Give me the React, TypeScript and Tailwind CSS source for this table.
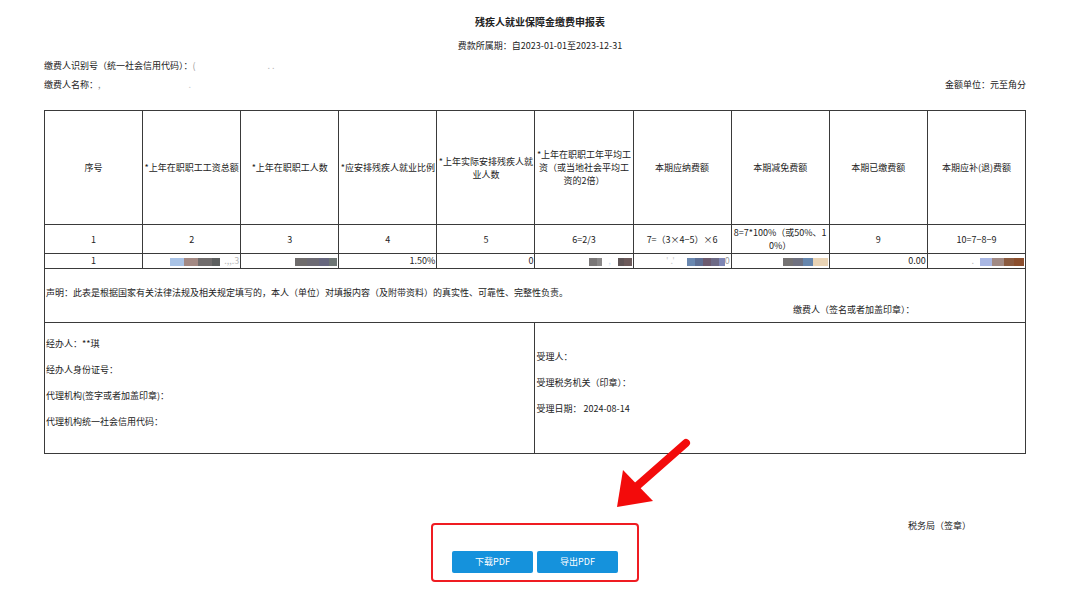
import React from "react";

const font = {
  fontFamily: '"Noto Sans CJK SC", "Noto Sans", "Liberation Sans", sans-serif',
};

function Blob({ colors, widths }: { colors: string[]; widths: number[] }) {
  return (
    <span className="inline-flex items-center align-middle blur-[0.6px]">
      {colors.map((c, i) => (
        <span
          key={i}
          className="inline-block h-[8px]"
          style={{ background: c, width: widths[i] }}
        />
      ))}
    </span>
  );
}

const headers = [
  "序号",
  "*上年在职职工工资总额",
  "*上年在职职工人数",
  "*应安排残疾人就业比例",
  "*上年实际安排残疾人就业人数",
  "*上年在职职工年平均工资（或当地社会平均工资的2倍）",
  "本期应纳费额",
  "本期减免费额",
  "本期已缴费额",
  "本期应补(退)费额",
];

const nums = [
  "1",
  "2",
  "3",
  "4",
  "5",
  "6=2/3",
  "7=（3×4−5）×6",
  "8=7*100%（或50%、10%）",
  "9",
  "10=7−8−9",
];

export default function App() {
  const td = "border border-[#3a3a3a] px-[1px] text-center align-middle";
  return (
    <div
      className="relative w-[1080px] h-[592px] bg-white text-[#222] overflow-hidden"
      style={font}
    >
      <div className="pt-[15px] text-center text-[10px] font-bold leading-[14px]">
        残疾人就业保障金缴费申报表
      </div>
      <div className="mt-[10px] text-center text-[9px] leading-[14px]">
        费款所属期：自2023-01-01至2023-12-31
      </div>
      <div className="ml-[44px] w-[982px]">
        <div className="mt-[6px] text-[9px] leading-[14px]">
          缴费人识别号（统一社会信用代码）：<span className="text-[#999]">(</span>
          <span className="ml-[72px] text-[#bbb]">. .</span>
        </div>
        <div className="mt-[5px] flex justify-between text-[9px] leading-[14px]">
          <span>
            缴费人名称：<span className="text-[#888]">,</span>
            <span className="ml-[88px] text-[#ccc]">.</span>
          </span>
          <span>金额单位：元至角分</span>
        </div>

        <table className="mt-[18px] w-[982px] table-fixed border-collapse text-[9px] leading-[13px]">
          <colgroup>
            {headers.map((_, i) => (
              <col key={i} className="w-[98px]" />
            ))}
          </colgroup>
          <tbody>
            <tr className="h-[114px]">
              {headers.map((h, i) => (
                <td key={i} className={td}>
                  {h}
                </td>
              ))}
            </tr>
            <tr className="h-[29px]">
              {nums.map((n, i) => (
                <td key={i} className={`${td} break-all`}>
                  {n}
                </td>
              ))}
            </tr>
            <tr className="h-[15px] leading-[12px]">
              <td className={td}>1</td>
              <td className={`${td} !text-right`}>
                <Blob colors={["#a9c3e6", "#a38983", "#706c6c", "#5d5f5f"]} widths={[14, 14, 14, 8]} />
                <span className="text-[#bbb] ml-[4px]">.,,.3</span>
              </td>
              <td className={`${td} !text-right`}>
                <Blob colors={["#6f6c6c", "#6c6a73", "#67677e", "#6d7574"]} widths={[12, 12, 10, 8]} />
              </td>
              <td className={`${td} !text-right`}>1.50%</td>
              <td className={`${td} !text-right`}>0</td>
              <td className={`${td} !text-right`}>
                <Blob colors={["#7a7777", "#8a8888"]} widths={[8, 5]} />
                <span className="inline-block w-[16px] text-[#cde] text-center">,</span>
                <Blob colors={["#5f5556", "#6c5a5a"]} widths={[6, 8]} />
              </td>
              <td className={`${td} !text-right`}>
                <span className="text-[#ccc] mr-[12px]">' .'</span>
                <Blob colors={["#6a88b0", "#5e6f94", "#6c5a6e", "#6d6a86", "#7e86b4"]} widths={[8, 8, 8, 8, 6]} />
                <span className="text-[#999]">0</span>
              </td>
              <td className={`${td} !text-right`}>
                <Blob colors={["#757373", "#6f7180", "#6686ad", "#e9d3b4"]} widths={[10, 10, 10, 15]} />
              </td>
              <td className={`${td} !text-right`}>0.00</td>
              <td className={`${td} !text-right`}>
                <span className="text-[#bbb] mr-[6px]">.</span>
                <Blob colors={["#a9b7e3", "#a18a84", "#8a5a3f", "#8b4e2d"]} widths={[12, 12, 10, 10]} />
              </td>
            </tr>
            <tr className="h-[54px]">
              <td colSpan={10} className="border border-[#3a3a3a] p-0 align-top">
                <div className="pl-[1px] pt-[17px] leading-[13px]">
                  声明：此表是根据国家有关法律法规及相关规定填写的，本人（单位）对填报内容（及附带资料）的真实性、可靠性、完整性负责。
                </div>
                <div className="mt-[4px] pl-[748px] leading-[13px]">缴费人（签名或者加盖印章）：</div>
              </td>
            </tr>
            <tr className="h-[131px]">
              <td colSpan={5} className="border border-[#3a3a3a] p-0 align-top">
                <div className="flex flex-col gap-[13px] pt-[14px] pl-[1px] leading-[13px]">
                  <span>经办人：**琪</span>
                  <span>经办人身份证号：</span>
                  <span>代理机构(签字或者加盖印章)：</span>
                  <span>代理机构统一社会信用代码：</span>
                </div>
              </td>
              <td colSpan={5} className="border border-[#3a3a3a] p-0 align-top">
                <div className="flex flex-col gap-[13px] pt-[27px] pl-[1px] leading-[13px]">
                  <span>受理人：</span>
                  <span>受理税务机关（印章）：</span>
                  <span>受理日期：&nbsp;2024-08-14</span>
                </div>
              </td>
            </tr>
          </tbody>
        </table>

        <div className="mt-[69px] grid grid-cols-[1fr_208px_1fr] text-[9px]">
          <div />
          <div className="h-[59px] rounded-[4px] border-2 border-[#ef1c22] pt-[26px] pl-[19px] flex gap-[4px]">
            <button className="h-[22px] w-[81px] rounded-[2px] bg-[#1592dc] text-white text-[9px]">
              下载PDF
            </button>
            <button className="h-[22px] w-[81px] rounded-[2px] bg-[#1592dc] text-white text-[9px]">
              导出PDF
            </button>
          </div>
          <div className="pl-[269px] -mt-[4px] leading-[13px] whitespace-nowrap">税务局（签章）</div>
        </div>
      </div>

      <svg className="absolute left-0 top-0 pointer-events-none" width="1080" height="592">
        <line x1="686" y1="443" x2="636" y2="487" stroke="#f30b0b" strokeWidth="8" strokeLinecap="round" />
        <polygon points="617,507 623,470 653,501" fill="#f30b0b" />
      </svg>
    </div>
  );
}
